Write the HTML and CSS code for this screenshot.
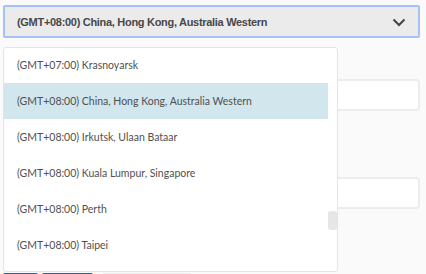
FILE: index.html
```html
<!DOCTYPE html>
<html lang="en">
<head>
    <meta charset="UTF-8">
    <meta name="viewport" content="width=device-width, initial-scale=1.0">
    <title>Time zone</title>
    <link rel="stylesheet" href="styles.css">
</head>
<body>
    <div class="form">
        <div class="select">
            <span class="select-value">(GMT+08:00) China, Hong Kong, Australia Western</span>
            <svg class="chevron" width="14" height="9" viewBox="0 0 14 9">
                <path d="M1.5 1.5 L7 7 L12.5 1.5" fill="none" stroke="#444" stroke-width="2"/>
            </svg>
        </div>
        <div class="field field-first"><div class="input"></div></div>
        <div class="field field-second"><div class="input"></div></div>
        <div class="buttons">
            <div class="btn btn-blue btn-small"></div>
            <div class="btn btn-blue btn-wide"></div>
            <div class="btn btn-grey"></div>
        </div>

        <!-- open dropdown lies over the fields -->
        <div class="dropdown">
            <ul class="options">
                <li class="option">(GMT+07:00) Krasnoyarsk</li>
                <li class="option selected">(GMT+08:00) China, Hong Kong, Australia Western</li>
                <li class="option">(GMT+08:00) Irkutsk, Ulaan Bataar</li>
                <li class="option">(GMT+08:00) Kuala Lumpur, Singapore</li>
                <li class="option">(GMT+08:00) Perth</li>
                <li class="option">(GMT+08:00) Taipei</li>
            </ul>
            <div class="scroll-track"><div class="scroll-thumb"></div></div>
        </div>
    </div>
</body>
</html>
```

FILE: styles.css
```css
body {
    margin: 0;
    background-color: #fafafa;
    font-family: 'Liberation Sans', Arial, sans-serif;
}

.form {
    position: relative;
    height: 274px;
    padding: 5px 6px 0 3px;
    box-sizing: border-box;
    overflow: hidden;
}

.select {
    height: 29px;
    display: flex;
    align-items: center;
    justify-content: space-between;
    padding: 0 12px 0 12px;
    background-color: #ebebeb;
    border: 2px solid #a4c2f4;
    border-radius: 2px;
}

.select-value {
    font-size: 11px;
    font-weight: bold;
    letter-spacing: -0.3px;
    color: #484848;
}

.chevron {
    margin-top: 1px;
}

.field {
    padding-left: 1px;
}

.field-first {
    margin-top: 41px;
}

.field-second {
    margin-top: 66px;
}

.input {
    height: 28px;
    background-color: #fff;
    border: 2px solid #ececec;
    border-radius: 4px;
}

.buttons {
    display: flex;
    margin-top: 64px;
}

.btn {
    height: 20px;
    border-radius: 2px;
}

.btn-blue {
    background-color: #1565c0;
}

.btn-small {
    width: 35px;
}

.btn-wide {
    width: 51px;
    margin-left: 4px;
}

.btn-grey {
    width: 90px;
    margin-left: 9px;
    background-color: #ececec;
}

.dropdown {
    position: absolute;
    top: 47px;
    left: 3px;
    width: 333px;
    height: 223px;
    display: flex;
    background-color: #fff;
    border: 1px solid #e4e4e4;
    border-radius: 3px;
    overflow: hidden;
}

.options {
    flex: 1;
    margin: -1px 0 0;
    padding: 0;
    list-style: none;
}

.option {
    height: 36px;
    display: flex;
    align-items: center;
    padding-left: 13px;
    font-family: Lato, sans-serif;
    font-size: 10.5px;
    color: #505050;
}

.selected {
    background-color: #d2e6ee;
}

.scroll-track {
    width: 9px;
}

.scroll-thumb {
    height: 19px;
    margin-top: 163px;
    background-color: #e6e6e6;
    border-radius: 3px;
}
```
